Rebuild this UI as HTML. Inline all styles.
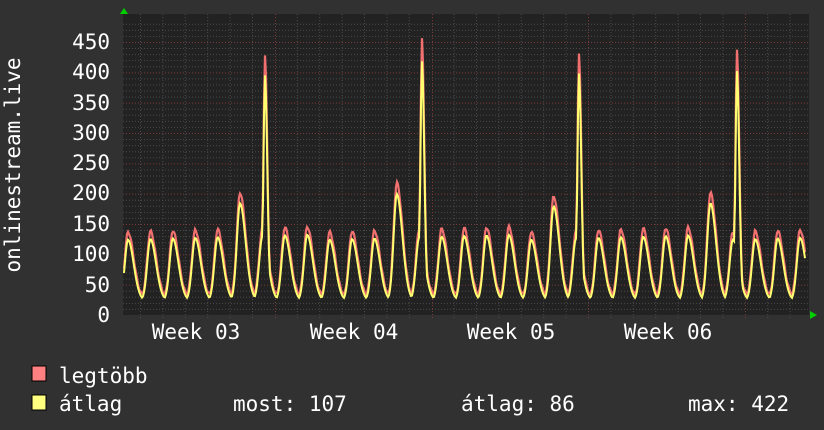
<!DOCTYPE html>
<html><head><meta charset="utf-8"><style>
html,body{margin:0;padding:0;background:#313131;}
svg{display:block}
text{font-family:"DejaVu Sans Mono","Liberation Mono",monospace;fill:#fff;font-size:21px}
</style></head><body>
<svg id="g" width="824" height="430" xmlns="http://www.w3.org/2000/svg">
<rect width="824" height="430" fill="#313131"/>
<rect x="123" y="14" width="686" height="301" fill="#222"/>
<g id="grid"></g>
<text x="110" y="322" text-anchor="end">0</text>
<text x="110" y="292" text-anchor="end">50</text>
<text x="110" y="261" text-anchor="end">100</text>
<text x="110" y="231" text-anchor="end">150</text>
<text x="110" y="200" text-anchor="end">200</text>
<text x="110" y="170" text-anchor="end">250</text>
<text x="110" y="140" text-anchor="end">300</text>
<text x="110" y="110" text-anchor="end">350</text>
<text x="110" y="79" text-anchor="end">400</text>
<text x="110" y="49" text-anchor="end">450</text>
<text transform="translate(20,165) rotate(-90)" text-anchor="middle">onlinestream.live</text>
<text x="196" y="339" text-anchor="middle">Week 03</text>
<text x="354" y="339" text-anchor="middle">Week 04</text>
<text x="511" y="339" text-anchor="middle">Week 05</text>
<text x="668" y="339" text-anchor="middle">Week 06</text>
<polyline id="mx" fill="none" stroke="#f07070" stroke-width="2.2"/>
<polyline id="av" fill="none" stroke="#ffff70" stroke-width="2"/>
<polygon points="120,14 128,14 124,8" fill="#00d000"/>
<polygon points="810,311 810,319 817,315" fill="#00d000"/>
<rect x="32" y="366" width="14" height="15" fill="#ff8080" stroke="#000" stroke-width="1"/>
<rect x="32" y="395" width="14" height="15" fill="#ffff80" stroke="#000" stroke-width="1"/>
<text x="59" y="383">legtöbb</text>
<text x="59" y="411">átlag</text>
<text x="233" y="411">most: 107</text>
<text x="461" y="411">átlag: 86</text>
<text x="688" y="411">max: 422</text>
</svg>
<script>
var ns="http://www.w3.org/2000/svg",G=document.getElementById("grid");
function ln(x1,y1,x2,y2,c){var l=document.createElementNS(ns,"line");l.setAttribute("x1",x1);l.setAttribute("y1",y1);l.setAttribute("x2",x2);l.setAttribute("y2",y2);l.setAttribute("stroke",c);l.setAttribute("stroke-dasharray","1,2");G.appendChild(l);}
function Y(v){return 315-v*0.6067;}
for(var v=10;v<=480;v+=10){var y=Y(v);if(y<14)break;ln(123,y+.5,809,y+.5,v%50==0?"#7a3a3a":"#4a4a4a");}
for(var x=140.5;x<809;x+=22.4){var maj=[275,432,589,747].some(function(m){return Math.abs(m-x)<5});ln(maj?Math.round(x)+.5:x,14,maj?Math.round(x)+.5:x,318,maj?"#7a3a3a":"#4a4a4a");}
var hum={5:160,12:175,19:155,26:160};
var sp=[[265,395],[422,418],[579,398],[737,402]];
function val(x){var s=24;for(var i=-1;i<32;i++){var c=128+22.4*i,d=x-c;var h=hum[i]||(100+((i*37)%9));var f=d<0?Math.exp(-Math.pow(d/4.5,2)):Math.exp(-Math.pow(d/8,2));s=Math.max(s,24+h*f);}
for(var k=0;k<sp.length;k++){var d=x-sp[k][0];s=Math.max(s,24+(sp[k][1]-24)*(d<0?Math.exp(-Math.pow(d/2.2,2)):Math.exp(-Math.pow(d/3.2,2))));}
return s;}
var a=[],b=[];for(var x=124;x<=805;x+=1){var v=val(x);b.push(x+","+Y(v*1.08+3+2*Math.sin(x*1.3)).toFixed(1));a.push(x+","+Y(v).toFixed(1));}
document.getElementById("mx").setAttribute("points",b.join(" "));
document.getElementById("av").setAttribute("points",a.join(" "));
</script>
</body></html>
